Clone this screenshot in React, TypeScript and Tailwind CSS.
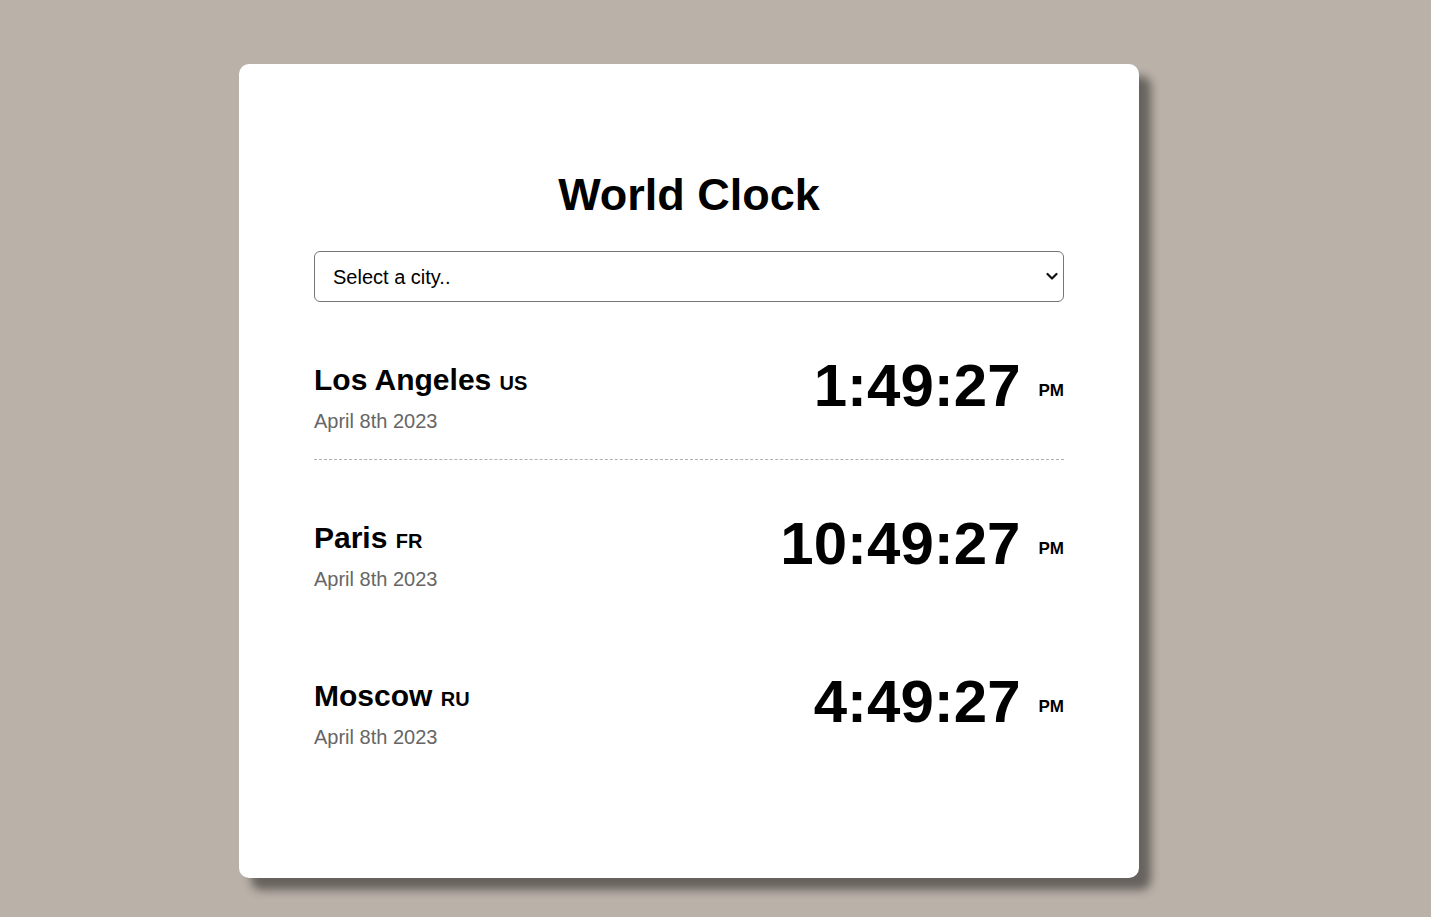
const cities = [
  { name: "Los Angeles", code: "US", date: "April 8th 2023", time: "1:49:27", ampm: "PM", border: true },
  { name: "Paris", code: "FR", date: "April 8th 2023", time: "10:49:27", ampm: "PM", border: false },
  { name: "Moscow", code: "RU", date: "April 8th 2023", time: "4:49:27", ampm: "PM", border: false },
];

export default function App() {
  return (
    <div
      className="min-h-screen bg-[#bab2a9] pl-[239px] pt-[64px] pb-[40px]"
      style={{ fontFamily: '"Liberation Sans", Arial, sans-serif' }}
    >
      <div className="w-[900px] rounded-[10px] bg-white px-[75px] pt-[105px] pb-[102px] shadow-[12px_12px_10px_rgba(0,0,0,0.45)]">
        <h1 className="text-center text-[45px] font-bold leading-[52px] text-black">World Clock</h1>

        <div className="relative mt-[30px]">
          <select className="block h-[51px] w-full appearance-none rounded-[6px] border border-[#767676] bg-white pl-[18px] pr-[30px] text-[20px] text-black outline-none">
            <option>Select a city..</option>
            <option>Los Angeles</option>
            <option>Paris</option>
            <option>Moscow</option>
          </select>
          {/* native-looking arrow */}
          <svg
            className="pointer-events-none absolute right-[6px] top-[21px]"
            width="12"
            height="9"
            viewBox="0 0 12 9"
            fill="none"
          >
            <path d="M1.5 2 L6 6.5 L10.5 2" stroke="#111" strokeWidth="2.2" strokeLinecap="round" strokeLinejoin="round" />
          </svg>
        </div>

        {cities.map((c) => (
          <div
            key={c.name}
            className={
              "flex items-start justify-between pt-[49px] pb-[26px] " +
              (c.border ? "border-b border-dashed border-[#b0b0b0]" : "border-b border-transparent")
            }
          >
            <div className="pt-[12px]">
              <div className="text-[30px] font-bold leading-[34px] text-black">
                {c.name} <span className="text-[20px] uppercase leading-none">{c.code}</span>
              </div>
              <div className="mt-[13px] text-[20px] leading-[23px] text-[#666666]">{c.date}</div>
            </div>
            <div className="flex items-center">
              <span className="text-[60px] font-bold leading-[69px] text-black">{c.time}</span>
              <span className="ml-[18px] mt-[11px] text-[17px] font-bold leading-[20px] text-black">{c.ampm}</span>
            </div>
          </div>
        ))}
      </div>
    </div>
  );
}
